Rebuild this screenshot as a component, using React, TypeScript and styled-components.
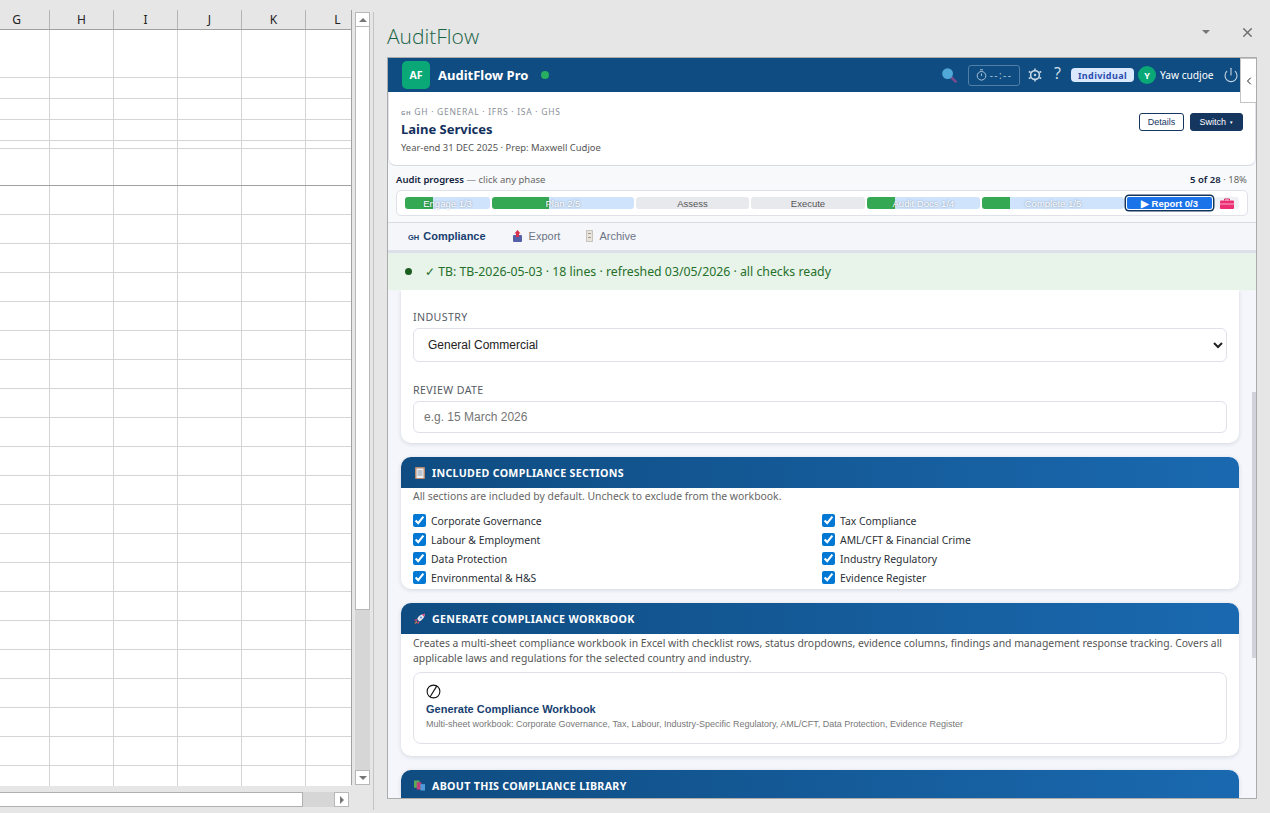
import React from "react";
import styled, { createGlobalStyle } from "styled-components";
import { ChevronLeft, Power, X } from "lucide-react";

const COLUMNS = ["G", "H", "I", "J", "K", "L"];
const ROW_HEIGHTS = [48, 21, 21, 21, 8, 37, ...Array(20).fill(29), 20];

const PHASES = [
  { label: "Engage 1/3", steps: 3, done: 33 },
  { label: "Plan 2/5", steps: 5, done: 40 },
  { label: "Assess", steps: 4, done: -1 },
  { label: "Execute", steps: 4, done: -1 },
  { label: "Audit Docs 1/4", steps: 4, done: 25 },
  { label: "Complete 1/5", steps: 5, done: 20 },
];

const SECTIONS = [
  "Corporate Governance",
  "Tax Compliance",
  "Labour & Employment",
  "AML/CFT & Financial Crime",
  "Data Protection",
  "Industry Regulatory",
  "Environmental & H&S",
  "Evidence Register",
];

const App: React.FC = () => {
  return (
    <Page>
      <GlobalStyle />
      <SheetPane>
        <SheetBody>
          <Grid>
            <HeaderRow>
              {COLUMNS.map((c) => (
                <HeaderCell key={c}>{c}</HeaderCell>
              ))}
            </HeaderRow>
            {ROW_HEIGHTS.map((h, i) => (
              <Row key={i} $height={h} $strong={i === 5} $last={i === ROW_HEIGHTS.length - 1}>
                {COLUMNS.map((c) => (
                  <Cell key={c} />
                ))}
              </Row>
            ))}
          </Grid>
          <VScroll>
            <ScrollButton>
              <ArrowUp />
            </ScrollButton>
            <VThumb />
            <VTrack />
            <ScrollButton>
              <ArrowDown />
            </ScrollButton>
          </VScroll>
        </SheetBody>
        <HScroll>
          <HThumb />
          <HTrack />
          <ScrollButton>
            <ArrowRight />
          </ScrollButton>
        </HScroll>
      </SheetPane>
      <Divider />

      <TaskPane>
        <TitleRow>
          <PaneTitle>AuditFlow</PaneTitle>
          <PaneActions>
            <ArrowDown />
            <X size={15} strokeWidth={2.4} color="#707070" />
          </PaneActions>
        </TitleRow>

        <Frame>
          <TopBar>
            <LogoTile>AF</LogoTile>
            <BrandName>AuditFlow Pro</BrandName>
            <StatusDot />
            <TopBarRight>
              <svg width="16" height="16" viewBox="0 0 16 16">
                <path d="M10 10l4.6 4.6" stroke="#7a4a8e" strokeWidth="2.6" strokeLinecap="round" />
                <circle cx="6.6" cy="6.6" r="5.4" fill="#4fa8d8" />
              </svg>
              <TimerBox>
                <svg width="11" height="12" viewBox="0 0 11 12" fill="none" stroke="#a9c2d8" strokeWidth="1">
                  <circle cx="5.5" cy="6.8" r="4.3" />
                  <path d="M5.5 4.5v2.4M4 .8h3" />
                </svg>
                --:--
              </TimerBox>
              <svg width="14" height="14" viewBox="0 0 14 14" fill="none" stroke="#c4d6e6">
                <circle cx="7" cy="7" r="4.4" strokeWidth="1.6" />
                <circle cx="7" cy="7" r="1.2" fill="#c4d6e6" stroke="none" />
                <path d="M7 .5v2M7 11.5v2M.8 3.5l1.8 1M11.4 9.5l1.8 1M.8 10.5l1.8-1M11.4 4.5l1.8-1" strokeWidth="1.5" />
              </svg>
              <HelpMark>?</HelpMark>
              <PlanPill>Individual</PlanPill>
              <Avatar>Y</Avatar>
              <UserName>Yaw cudjoe</UserName>
              <Power size={16} color="#c9d8e6" strokeWidth={1.6} />
            </TopBarRight>
          </TopBar>

          <CollapseTab>
            <ChevronLeft size={12} color="#222" strokeWidth={2} />
          </CollapseTab>

          <ClientCard>
            <div>
              <ClientMeta>
                <SmallFlag>GH</SmallFlag> GH · GENERAL · IFRS · ISA · GHS
              </ClientMeta>
              <ClientName>Laine Services</ClientName>
              <ClientSub>Year-end 31 DEC 2025 · Prep: Maxwell Cudjoe</ClientSub>
            </div>
            <ClientActions>
              <OutlineButton>Details</OutlineButton>
              <SolidButton>
                Switch <Caret>▼</Caret>
              </SolidButton>
            </ClientActions>
          </ClientCard>

          <Progress>
            <ProgressHead>
              <span>
                <strong>Audit progress</strong> <Muted>— click any phase</Muted>
              </span>
              <span>
                <strong>5 of 28</strong> <Muted>· 18%</Muted>
              </span>
            </ProgressHead>
            <PhaseBar>
              {PHASES.map((p) => (
                <Phase key={p.label} $steps={p.steps} $done={p.done}>
                  {p.label}
                </Phase>
              ))}
              <ActivePhase>▶ Report 0/3</ActivePhase>
              <ToolSlot>
                <svg width="14" height="11" viewBox="0 0 14 11">
                  <path d="M4.5 2.5V1h5v1.5" fill="none" stroke="#d81b60" strokeWidth="1" />
                  <rect y="2.5" width="14" height="8.5" rx="1" fill="#ec2f72" />
                  <path d="M0 6h14" stroke="#fbd0e0" strokeWidth=".8" />
                </svg>
              </ToolSlot>
            </PhaseBar>
          </Progress>

          <TabBar>
            <Tab $active>
              <TabFlag>GH</TabFlag>Compliance
            </Tab>
            <Tab>
              <svg width="11" height="12" viewBox="0 0 11 12">
                <rect x="1" y="5" width="9" height="7" rx="1" fill="#5560a8" />
                <path d="M5.5 0l3 3.4H7V7H4V3.4H2.5z" fill="#d8324c" />
              </svg>
              Export
            </Tab>
            <Tab>
              <svg width="7" height="12" viewBox="0 0 7 12">
                <rect x=".5" y=".5" width="6" height="11" fill="#e8e4dc" stroke="#c9c5bc" />
                <path d="M2 3.5h3M2 7.5h3" stroke="#a09c94" />
              </svg>
              Archive
            </Tab>
          </TabBar>

          <Banner>
            <BannerDot />✓ TB: TB-2026-05-03 · 18 lines · refreshed 03/05/2026 · all checks ready
          </Banner>

          <Content>
            <ThinScroll />
            <FormCard>
              <FieldLabel>INDUSTRY</FieldLabel>
              <IndustrySelect defaultValue="General Commercial">
                <option>General Commercial</option>
              </IndustrySelect>
              <FieldLabel>REVIEW DATE</FieldLabel>
              <DateInput placeholder="e.g. 15 March 2026" readOnly />
            </FormCard>

            <Card>
              <CardHead>
                <HeadIcon>
                  <svg width="10" height="12" viewBox="0 0 10 12">
                    <rect width="10" height="12" rx="1" fill="#b98a6e" />
                    <rect x="1.5" y="1.5" width="7" height="9.5" fill="#eceff3" />
                    <path d="M2.5 4h5M2.5 6h5M2.5 8h5" stroke="#8a98a8" />
                  </svg>
                </HeadIcon>
                INCLUDED COMPLIANCE SECTIONS
              </CardHead>
              <CardNote>All sections are included by default. Uncheck to exclude from the workbook.</CardNote>
              <ChecksGrid>
                {SECTIONS.map((s) => (
                  <CheckRow key={s}>
                    <input type="checkbox" defaultChecked />
                    {s}
                  </CheckRow>
                ))}
              </ChecksGrid>
            </Card>

            <Card>
              <CardHead>
                <HeadIcon>
                  <svg width="12" height="12" viewBox="0 0 12 12">
                    <path d="M11.8.2C8 .4 5 2.4 3.4 6l2.6 2.6C9.6 7 11.6 4 11.8.2z" fill="#e6e8f0" />
                    <path d="M11.8.2C10.6.3 9.4.5 8.4 1l2.6 2.6c.5-1 .7-2.2.8-3.4z" fill="#d9487e" />
                    <circle cx="7.6" cy="4.4" r="1.1" fill="#5c8fd6" />
                    <path d="M3.4 6L1 6.6 .4 8.4l3-.6zM6 8.6l-.6 2.4-1.8.6.6-3z" fill="#c2417c" />
                    <path d="M2.4 8.2L.4 11.6l3.4-2z" fill="#f08a3c" />
                  </svg>
                </HeadIcon>
                GENERATE COMPLIANCE WORKBOOK
              </CardHead>
              <CardText>
                Creates a multi-sheet compliance workbook in Excel with checklist rows, status dropdowns, evidence
                columns, findings and management response tracking. Covers all applicable laws and regulations for the
                selected country and industry.
              </CardText>
              <GenerateBox>
                <svg width="15" height="15" viewBox="0 0 15 15" fill="none" stroke="#111" strokeWidth="1.1">
                  <circle cx="7.5" cy="7.5" r="6.4" />
                  <path d="M4 13L11 1.6" />
                </svg>
                <GenerateTitle>Generate Compliance Workbook</GenerateTitle>
                <GenerateSub>
                  Multi-sheet workbook: Corporate Governance, Tax, Labour, Industry-Specific Regulatory, AML/CFT, Data
                  Protection, Evidence Register
                </GenerateSub>
              </GenerateBox>
            </Card>

            <Card>
              <CardHead>
                <HeadIcon>
                  <svg width="12" height="11" viewBox="0 0 12 11">
                    <rect x="0" y="0" width="6" height="8" fill="#5cab58" />
                    <rect x="3" y="2" width="5" height="8" fill="#c2417c" />
                    <rect x="7" y="4" width="5" height="7" fill="#4f9bd8" />
                  </svg>
                </HeadIcon>
                ABOUT THIS COMPLIANCE LIBRARY
              </CardHead>
            </Card>
          </Content>
        </Frame>
      </TaskPane>
    </Page>
  );
};

const GlobalStyle = createGlobalStyle`
  html, body {
    margin: 0;
    padding: 0;
    height: 100%;
    overflow: hidden;
    background: #e6e6e6;
  }
  * { box-sizing: border-box; }
`;

const Page = styled.div`
  display: flex;
  width: 1270px;
  height: 813px;
  background: #e6e6e6;
  font-family: "Noto Sans", sans-serif;
  overflow: hidden;
`;

/* ---- spreadsheet side ---- */

const SheetPane = styled.div`
  width: 373px;
  flex: none;
  display: flex;
  flex-direction: column;
`;

const SheetBody = styled.div`
  display: flex;
  padding-top: 10px;
  gap: 3px;
`;

const Grid = styled.div`
  width: 352px;
  height: 775px;
  border-right: 1px solid #a0a0a0;
  border-bottom: 1px solid #a0a0a0;
`;

const COLUMN_TEMPLATE = "50px repeat(4, 64px) 1fr";

const HeaderRow = styled.div`
  display: grid;
  grid-template-columns: ${COLUMN_TEMPLATE};
  height: 20px;
  border-bottom: 1px solid #a0a0a0;
`;

const HeaderCell = styled.div`
  display: flex;
  align-items: center;
  justify-content: center;
  font-size: 12px;
  color: #222;
  border-right: 1px solid #b4b4b4;
  &:first-child {
    padding-right: 16px;
  }
  &:last-child {
    border-right: none;
    padding-left: 18px;
  }
`;

const Row = styled.div<{ $height: number; $strong?: boolean; $last?: boolean }>`
  display: grid;
  grid-template-columns: ${COLUMN_TEMPLATE};
  height: ${(p) => p.$height}px;
  background: #fff;
  border-bottom: ${(p) => (p.$last ? "none" : p.$strong ? "1px solid #a0a0a0" : "1px solid #d4d4d4")};
`;

const Cell = styled.div`
  border-right: 1px solid #d4d4d4;
  &:last-child {
    border-right: none;
  }
`;

const VScroll = styled.div`
  width: 15px;
  margin-top: 2px;
  display: flex;
  flex-direction: column;
`;

const ScrollButton = styled.div`
  width: 15px;
  height: 15px;
  flex: none;
  display: flex;
  align-items: center;
  justify-content: center;
  background: #fff;
  border: 1px solid #b8b8b8;
`;

const VThumb = styled.div`
  height: 583px;
  background: #fff;
  border: 1px solid #b8b8b8;
  border-top: none;
`;

const VTrack = styled.div`
  flex: 1;
  background: #d6d6d6;
`;

const HScroll = styled.div`
  display: flex;
  width: 349px;
  height: 15px;
  margin-top: 7px;
`;

const HThumb = styled.div`
  width: 303px;
  background: #fff;
  border: 1px solid #b0b0b0;
  border-left: none;
`;

const HTrack = styled.div`
  flex: 1;
  background: #d6d6d6;
`;

const ArrowUp = styled.span`
  width: 0;
  height: 0;
  border-left: 4.5px solid transparent;
  border-right: 4.5px solid transparent;
  border-bottom: 4.5px solid #777;
`;

const ArrowDown = styled.span`
  width: 0;
  height: 0;
  border-left: 4.5px solid transparent;
  border-right: 4.5px solid transparent;
  border-top: 4.5px solid #777;
`;

const ArrowRight = styled.span`
  width: 0;
  height: 0;
  border-top: 4.5px solid transparent;
  border-bottom: 4.5px solid transparent;
  border-left: 4.5px solid #777;
`;

const Divider = styled.div`
  width: 1px;
  flex: none;
  margin: 12px 0 3px;
  background: #c4c4c4;
`;

/* ---- task pane ---- */

const TaskPane = styled.div`
  flex: 1;
  display: flex;
  flex-direction: column;
  padding: 0 13px 14px 13px;
  min-width: 0;
`;

const TitleRow = styled.div`
  height: 57px;
  flex: none;
  display: flex;
  align-items: flex-end;
  justify-content: space-between;
  padding-bottom: 6px;
`;

const PaneTitle = styled.div`
  font-family: "Open Sans", sans-serif;
  font-weight: 300;
  font-size: 21px;
  line-height: 30px;
  color: #1a6446;
`;

const PaneActions = styled.div`
  display: flex;
  align-items: center;
  gap: 30px;
  height: 30px;
  margin-bottom: 4px;
  padding-right: 2px;
`;

const Frame = styled.div`
  position: relative;
  flex: 1;
  min-height: 0;
  display: flex;
  flex-direction: column;
  overflow: hidden;
  border: 1px solid #ababab;
  background: #f4f6fb;
`;

const TopBar = styled.div`
  height: 34px;
  flex: none;
  display: flex;
  align-items: center;
  padding: 0 17px 0 14px;
  background: #0f4c81;
`;

const LogoTile = styled.div`
  width: 28px;
  height: 28px;
  display: flex;
  align-items: center;
  justify-content: center;
  border-radius: 5px;
  background: #0aa877;
  color: #fff;
  font-size: 10.5px;
  font-weight: 700;
`;

const BrandName = styled.div`
  margin-left: 8px;
  font-size: 13px;
  font-weight: 700;
  color: #fff;
`;

const StatusDot = styled.span`
  width: 8px;
  height: 8px;
  margin: -1px 0 0 13px;
  border-radius: 50%;
  background: #27ae60;
`;

const TopBarRight = styled.div`
  margin-left: auto;
  display: flex;
  align-items: center;
`;

const TimerBox = styled.div`
  display: flex;
  align-items: center;
  justify-content: center;
  gap: 3px;
  width: 52px;
  height: 21px;
  margin: 0 8px 0 11px;
  border: 1px solid #4f7ea8;
  border-radius: 3px;
  color: #a9c2d8;
  font-size: 10px;
  letter-spacing: 1.4px;
`;

const HelpMark = styled.span`
  width: 9px;
  margin: -5px 8px 0 12px;
  font-family: "Open Sans", sans-serif;
  font-size: 16px;
  color: #d5e2ee;
`;

const PlanPill = styled.span`
  width: 63px;
  height: 14px;
  display: flex;
  align-items: center;
  justify-content: center;
  border-radius: 4px;
  background: #dbe9fe;
  color: #2a4db0;
  font-size: 9px;
  font-weight: 700;
  letter-spacing: 0.4px;
`;

const Avatar = styled.span`
  width: 18px;
  height: 18px;
  margin: 0 4px;
  display: flex;
  align-items: center;
  justify-content: center;
  border-radius: 50%;
  background: #0aa877;
  color: #fff;
  font-size: 9px;
  font-weight: 700;
`;

const UserName = styled.span`
  width: 54px;
  margin-right: 9px;
  white-space: nowrap;
  color: #fff;
  font-size: 10.2px;
`;

const CollapseTab = styled.div`
  position: absolute;
  top: 0;
  right: 0;
  width: 16px;
  height: 45px;
  display: flex;
  align-items: center;
  justify-content: center;
  background: #fff;
  border: 1px solid #c4c4c4;
  border-right: none;
`;

const ClientCard = styled.div`
  height: 74px;
  flex: none;
  display: flex;
  justify-content: space-between;
  padding: 13px 12px 0 12px;
  background: #fff;
  border: 1px solid #e2e4ea;
  border-top: none;
  border-bottom-color: #d9dbe2;
  border-radius: 0 0 8px 8px;
`;

const ClientMeta = styled.div`
  font-size: 8.5px;
  line-height: 14px;
  letter-spacing: 0.72px;
  color: #8a8f98;
`;

const SmallFlag = styled.span`
  font-size: 6px;
  font-weight: 700;
`;

const ClientName = styled.div`
  margin-top: 1px;
  font-size: 13px;
  line-height: 17px;
  font-weight: 700;
  color: #12305c;
`;

const ClientSub = styled.div`
  margin-top: 3px;
  font-size: 9.43px;
  line-height: 14px;
  color: #555;
`;

const ClientActions = styled.div`
  display: flex;
  gap: 6px;
  padding-top: 8px;
`;

const OutlineButton = styled.div`
  width: 45px;
  height: 18px;
  display: flex;
  align-items: center;
  justify-content: center;
  border: 1px solid #14365f;
  border-radius: 3px;
  background: #fff;
  color: #14365f;
  font-family: "Liberation Sans", sans-serif;
  font-size: 9px;
`;

const SolidButton = styled(OutlineButton)`
  width: 53px;
  gap: 3px;
  background: #14365f;
  color: #fff;
`;

const Caret = styled.span`
  font-size: 4.5px;
`;

const Progress = styled.div`
  height: 57px;
  flex: none;
  padding: 7px 8px 0 8px;
  background: #f8f9fb;
  border-bottom: 1px solid #d9dbe2;
`;

const ProgressHead = styled.div`
  display: flex;
  justify-content: space-between;
  padding-right: 1px;
  font-size: 9.5px;
  line-height: 14px;
  color: #12233d;
  strong {
    font-weight: 600;
  }
`;

const Muted = styled.span`
  color: #666;
`;

const PhaseBar = styled.div`
  height: 26px;
  margin-top: 3px;
  display: flex;
  align-items: center;
  gap: 2px;
  padding: 0 8px 0 8px;
  background: #fff;
  border: 1px solid #e0e2e8;
  border-radius: 5px;
`;

const Phase = styled.div<{ $steps: number; $done: number }>`
  flex: ${(p) => p.$steps} 1 0;
  height: 12px;
  display: flex;
  align-items: center;
  justify-content: center;
  border-radius: 3px;
  font-family: "Liberation Sans", sans-serif;
  font-size: 9.5px;
  color: ${(p) => (p.$done < 0 ? "#555" : "#fff")};
  text-shadow: ${(p) => (p.$done < 0 ? "none" : "0 0 2px rgba(40,55,75,.55)")};
  background: ${(p) =>
    p.$done < 0
      ? "#e8e9ed"
      : `linear-gradient(90deg, #34a853 ${p.$done}%, #cfe3fc ${p.$done}%)`};
`;

const ActivePhase = styled.div`
  flex: 3 1 0;
  height: 12px;
  margin: 0 1px;
  display: flex;
  align-items: center;
  justify-content: center;
  border-radius: 2px;
  background: #1a73e8;
  box-shadow: 0 0 0 1px #fff, 0 0 0 2.5px #12355b;
  color: #fff;
  font-family: "Liberation Sans", sans-serif;
  font-size: 9.5px;
  font-weight: 700;
`;

const ToolSlot = styled.div`
  width: 24px;
  height: 12px;
  flex: none;
  display: flex;
  align-items: center;
  padding-left: 5px;
  border-radius: 3px;
  background: #f0f1f4;
`;

const TabBar = styled.div`
  height: 30px;
  flex: none;
  display: flex;
  align-items: center;
  gap: 26px;
  padding: 0 0 1px 20px;
  background: #f4f6fa;
  border-bottom: 3px solid #dde0e8;
`;

const Tab = styled.div<{ $active?: boolean }>`
  display: flex;
  align-items: center;
  gap: 6px;
  font-family: "Liberation Sans", sans-serif;
  font-size: 11px;
  font-weight: ${(p) => (p.$active ? 700 : 400)};
  color: ${(p) => (p.$active ? "#17406f" : "#6d7484")};
`;

const TabFlag = styled.span`
  margin-right: -2px;
  font-size: 7.5px;
  font-weight: 700;
  padding-top: 2px;
`;

const Banner = styled.div`
  height: 37px;
  flex: none;
  display: flex;
  align-items: center;
  padding-left: 17px;
  background: #e8f4e9;
  color: #256f2b;
  font-size: 12.3px;
`;

const BannerDot = styled.span`
  width: 7px;
  height: 7px;
  margin-right: 13px;
  border-radius: 50%;
  background: #1b5e20;
`;

const Content = styled.div`
  position: relative;
  flex: 1;
  min-height: 0;
  overflow: hidden;
  display: flex;
  flex-direction: column;
  gap: 14px;
  padding: 0 17px 0 13px;
`;

const ThinScroll = styled.div`
  position: absolute;
  top: 102px;
  right: 0;
  width: 4px;
  height: 266px;
  background: #d2d3da;
`;

const Card = styled.section`
  flex: none;
  background: #fff;
  border-radius: 10px;
  box-shadow: 0 1px 4px rgba(20, 30, 60, 0.14);
`;

const FormCard = styled(Card)`
  padding: 18px 12px 10px;
  border-radius: 0 0 10px 10px;
`;

const FieldLabel = styled.div`
  font-size: 10.6px;
  line-height: 18px;
  letter-spacing: 0.4px;
  color: #555b66;
  margin-bottom: 2px;
`;

const IndustrySelect = styled.select`
  display: block;
  width: 100%;
  height: 34px;
  margin-bottom: 19px;
  padding: 0 10px;
  border: 1px solid #dfe1ea;
  border-radius: 6px;
  background: #fff;
  color: #222;
  font-family: "Liberation Sans", sans-serif;
  font-size: 12px;
  outline: none;
`;

const DateInput = styled.input`
  display: block;
  width: 100%;
  height: 32px;
  padding: 0 10px;
  border: 1px solid #dfe1ea;
  border-radius: 6px;
  background: #fff;
  font-family: "Liberation Sans", sans-serif;
  font-size: 12px;
  outline: none;
  &::placeholder {
    color: #757575;
  }
`;

const CardHead = styled.header`
  height: 31px;
  display: flex;
  align-items: center;
  gap: 7px;
  padding-left: 13px;
  border-radius: 10px 10px 0 0;
  background: linear-gradient(90deg, #0f4c81, #1a69b0);
  color: #fff;
  font-size: 10.65px;
  font-weight: 700;
  letter-spacing: 0.32px;
`;

const HeadIcon = styled.span`
  width: 11px;
  flex: none;
  display: flex;
  justify-content: center;
  overflow: visible;
`;

const CardNote = styled.div`
  padding: 1px 12px 0;
  font-size: 10.4px;
  line-height: 15px;
  color: #666;
`;

const ChecksGrid = styled.div`
  display: grid;
  grid-template-columns: 1fr 1fr;
  column-gap: 4px;
  padding: 7px 12px 2px;
`;

const CheckRow = styled.label`
  height: 19px;
  display: flex;
  align-items: center;
  gap: 5px;
  font-size: 10.4px;
  color: #2b2f36;
  input {
    width: 13px;
    height: 13px;
    margin: 0;
    accent-color: #0078d4;
  }
`;

const CardText = styled.p`
  margin: 0;
  padding: 2px 12px 0;
  font-size: 10.38px;
  line-height: 15px;
  color: #555;
`;

const GenerateBox = styled.div`
  margin: 6px 12px 12px;
  height: 72px;
  padding: 11px 12px 0;
  border: 1px solid #e0e2ea;
  border-radius: 8px;
  font-family: "Liberation Sans", sans-serif;
  svg {
    display: block;
  }
`;

const GenerateTitle = styled.div`
  margin-top: 3px;
  font-size: 11px;
  line-height: 14px;
  font-weight: 700;
  color: #17406f;
`;

const GenerateSub = styled.div`
  margin-top: 2px;
  font-size: 9px;
  line-height: 13px;
  color: #777;
`;

export default App;
